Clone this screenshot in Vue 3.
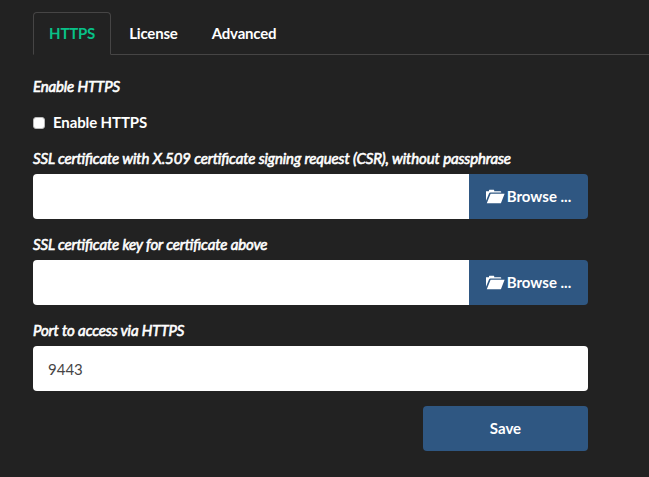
<script setup>
import { ref } from 'vue'
const tabs = ['HTTPS', 'License', 'Advanced']
const active = ref('HTTPS')
const files = [
  'SSL certificate with X.509 certificate signing request (CSR), without passphrase',
  'SSL certificate key for certificate above',
]
const enabled = ref(false)
const port = ref('9443')
</script>

<template>
  <main class="page">
    <nav class="tabs">
      <a v-for="t in tabs" :key="t" class="tab" :class="{ active: t === active }" @click="active = t">{{ t }}</a>
    </nav>
    <form class="form" @submit.prevent>
      <div class="label first">Enable HTTPS</div>
      <label class="check"><input v-model="enabled" type="checkbox" class="native" /><span class="box"></span><span>Enable HTTPS</span></label>
      <template v-for="f in files" :key="f">
        <div class="label">{{ f }}</div>
        <div class="group">
          <input class="input" type="text" />
          <button class="browse" type="button">
            <svg class="folder" viewBox="0 0 19 15"><path d="M0 11.8V2.2H3V1.3Q3 .8 3.5 .8H7.7Q8.2 .8 8.2 1.3V2.2H14.5Q15.2 2.2 15.2 2.9V3.6H4.5Q3.4 3.6 3 4.5ZM4.6 4.8H18.6L15.1 13.7Q14.9 14.2 14.3 14.2H.8Z" /></svg>
            <span>Browse ...</span>
          </button>
        </div>
      </template>
      <div class="label">Port to access via HTTPS</div>
      <input v-model="port" class="input port" type="text" />
      <button class="save" type="submit">Save</button>
    </form>
  </main>
</template>

<style>
body { background: #222; }
</style>

<style scoped>
* { box-sizing: border-box; }
.page { height: 477px; padding-top: 12px; overflow: hidden; background: #222; color: #fff; font: 700 15px/21px Lato, sans-serif; letter-spacing: -.12px; }
.tabs { display: flex; height: 43px; margin-left: 33px; border-bottom: 1px solid #464545; }
.tab { height: 43px; padding: 10px 15px; margin-right: 2px; border: 1px solid transparent; border-radius: 4px 4px 0 0; letter-spacing: -.18px; }
.tab.active { color: #08c187; background: #222; border-color: #464545 #464545 #222; }
.form { display: flex; flex-direction: column; width: 555px; margin-left: 33px; }
.label { height: 21px; margin-bottom: 5px; font-style: italic; font-weight: 400; letter-spacing: -.13px; font-feature-settings: "liga" 1; -webkit-text-stroke: .6px #fff; white-space: nowrap; }
.label.first { margin-top: 21px; }
.check { display: flex; align-items: center; height: 21px; margin: 10px 0 15px; }
.native { position: absolute; opacity: 0; }
.box { width: 12px; height: 12px; margin-right: 8px; border-radius: 3px; background: #fff; border: 1px solid #bbb; }
.group { display: flex; height: 45px; margin-bottom: 15px; }
.input { flex: 1; height: 45px; min-width: 0; padding: 0 15px; border: 0; border-radius: 4px 0 0 4px; background: #fff; color: #464545; font: 400 15px Lato, sans-serif; }
.browse { display: flex; align-items: center; justify-content: center; width: 119px; gap: 2px; padding: 0; border: 0; border-radius: 0 4px 4px 0; background: #2f5782; color: #fff; font: inherit; }
.folder { width: 19px; height: 15px; fill: #fff; }
.port { flex: none; border-radius: 4px; }
.save { width: 165px; height: 45px; margin: 15px 0 0 auto; padding: 0; border: 0; border-radius: 4px; background: #2f5782; color: #fff; font: inherit; }
</style>
